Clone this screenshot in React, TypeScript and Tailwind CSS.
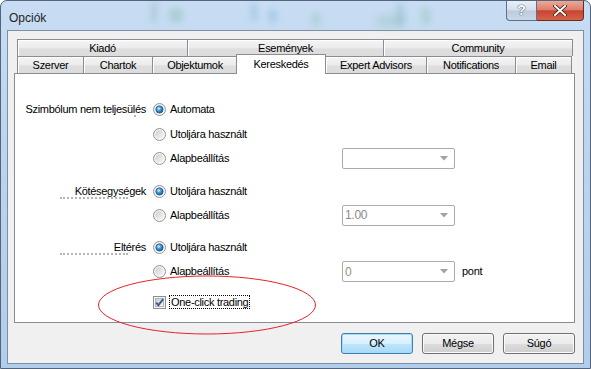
import React from 'react';

const font = "font-['Liberation_Sans',Arial,sans-serif]";

const Radio: React.FC<{ checked?: boolean }> = ({ checked }) => (
  <svg width="13" height="13" viewBox="0 0 13 13" className="shrink-0">
    <circle cx="6.5" cy="6.5" r="6" fill="url(#rOuter)" stroke="#949494" />
    <circle cx="6.5" cy="6.5" r="4.2" fill="url(#rInner)" />
    {checked && (
      <>
        <circle cx="6.5" cy="6.5" r="3.6" fill="url(#rDot)" stroke="#1d5a8a" strokeWidth="0.8" />
        <circle cx="5.7" cy="5.6" r="1.1" fill="#cdeafd" opacity="0.9" />
      </>
    )}
  </svg>
);

const Checkbox: React.FC = () => (
  <svg width="13" height="13" viewBox="0 0 13 13" className="shrink-0">
    <rect x="0.5" y="0.5" width="12" height="12" fill="#f4f4f4" stroke="#8e8f8f" />
    <rect x="2.5" y="2.5" width="8" height="8" fill="url(#cInner)" stroke="#b3b6bb" />
    <path d="M3.2 6.6 L5.4 9.2 L10.2 3.1" fill="none" stroke="#44598c" strokeWidth="1.9" />
  </svg>
);

const Combo: React.FC<{ value?: string; color?: string }> = ({ value, color }) => (
  <div className="w-[113px] h-[21px] flex items-center border border-[#ababab] rounded-[2px] bg-white pl-[2px] pr-[6px] shrink-0">
    <span className={`flex-1 text-[12px] ${color ?? 'text-[#8a8a8a]'}`}>{value}</span>
    <svg width="8" height="5" viewBox="0 0 8 5">
      <path d="M0 0 H8 L4 4.5 Z" fill="#a2a2a2" />
    </svg>
  </div>
);

const Tab: React.FC<{ label: string; w: string; last?: boolean }> = ({ label, w, last }) => (
  <div
    className={`${w} h-[17px] flex items-center justify-center border-t border-l border-[#898c95] ${last ? 'border-r' : ''} bg-[linear-gradient(180deg,#f4f4f4_0%,#ececec_50%,#dedede_55%,#dcdcdc_100%)] shadow-[inset_1px_1px_0_#ffffff]`}
  >
    {label}
  </div>
);

const Button: React.FC<{ label: string; primary?: boolean }> = ({ label, primary }) => (
  <div
    className={`w-[72px] h-[21px] flex items-center justify-center rounded-[3px] border ${
      primary
        ? 'border-[#3c7fb1] bg-[linear-gradient(180deg,#eaf6fd_0%,#d9f0fc_50%,#bee6fd_51%,#a7d9f5_100%)] shadow-[inset_0_0_0_1px_#a6dcf7]'
        : 'border-[#707070] bg-[linear-gradient(180deg,#f2f2f2_0%,#ebebeb_50%,#dddddd_51%,#cfcfcf_100%)] shadow-[inset_0_0_0_1px_#fbfbfb]'
    }`}
  >
    {label}
  </div>
);

const Row: React.FC<{ h: string; label?: string; dots?: string; children?: React.ReactNode }> = ({ h, label, dots, children }) => (
  <div className={`flex items-center ${h}`}>
    <div className="relative w-[131px] text-right">
      {label}
      {dots && <span className={`absolute top-[14px] h-0 border-t-2 border-dotted border-[#b5b5b5] ${dots}`} />}
    </div>
    {children}
  </div>
);

const Choice: React.FC<{ label: string; checked?: boolean }> = ({ label, checked }) => (
  <div className="w-[189px] ml-[7px] flex items-center gap-[4px]">
    <Radio checked={checked} />
    <span>{label}</span>
  </div>
);

export default function App() {
  return (
    <div className={`w-[591px] h-[369px] bg-white text-[11px] tracking-[-0.3px] text-black ${font}`}>
      <svg width="0" height="0" className="absolute">
        <defs>
          <linearGradient id="rOuter" x1="0" y1="0" x2="1" y2="1">
            <stop offset="0" stopColor="#eaeaea" />
            <stop offset="1" stopColor="#ffffff" />
          </linearGradient>
          <linearGradient id="rInner" x1="0" y1="0" x2="1" y2="1">
            <stop offset="0" stopColor="#cfcfcf" />
            <stop offset="1" stopColor="#f7f7f7" />
          </linearGradient>
          <radialGradient id="rDot" cx="0.4" cy="0.35" r="0.7">
            <stop offset="0" stopColor="#9fd6fb" />
            <stop offset="0.6" stopColor="#2a86c9" />
            <stop offset="1" stopColor="#0d5891" />
          </radialGradient>
          <linearGradient id="cInner" x1="0" y1="0" x2="1" y2="1">
            <stop offset="0" stopColor="#c9ccd2" />
            <stop offset="1" stopColor="#f5f5f5" />
          </linearGradient>
        </defs>
      </svg>

      <div className="relative w-[591px] h-[369px] flex flex-col rounded-t-[7px] border border-[#52657d] bg-[linear-gradient(180deg,#c8ddf3_0%,#bcd4ee_40%,#b2cdea_100%)] overflow-hidden">
        {/* title bar */}
        <div className="relative h-[29px] flex items-start justify-between shrink-0">
          <div className="absolute left-[150px] top-[0px] w-[6px] h-[22px] rounded-full bg-[#6fae9a] opacity-30 blur-[3px]" />
          <div className="absolute left-[168px] top-[6px] w-[14px] h-[16px] rounded-full bg-[#6fae9a] opacity-30 blur-[3px]" />
          <div className="absolute left-[250px] top-[2px] w-[6px] h-[18px] rounded-full bg-[#5f9fc8] opacity-30 blur-[3px]" />
          <div className="absolute left-[268px] top-[8px] w-[8px] h-[14px] rounded-full bg-[#5f9fc8] opacity-30 blur-[3px]" />
          <div className="absolute left-[310px] top-[10px] w-[10px] h-[16px] rounded-full bg-[#7fb8a0] opacity-25 blur-[3px]" />
          <div className="absolute left-[375px] top-[14px] w-[30px] h-[12px] rounded-full bg-[#7fb8a0] opacity-30 blur-[4px]" />
          <div className="absolute left-[395px] top-[2px] w-[8px] h-[22px] rounded-full bg-[#6fa8b8] opacity-30 blur-[3px]" />
          <div className="absolute left-[420px] top-[6px] w-[10px] h-[18px] rounded-full bg-[#7fb8a0] opacity-30 blur-[3px]" />
          <span className="relative mt-[8px] ml-[8px] text-[12px] tracking-[0px] text-[#1e1e1e]">Opciók</span>
          <div className="relative flex mr-[6px]">
            <div className="w-[31px] h-[20px] flex items-center justify-center rounded-bl-[4px] border border-t-0 border-[#5d7188] bg-[linear-gradient(180deg,#e8eff7_0%,#d4dfec_48%,#bccbdd_52%,#cad8e8_100%)]">
              <span className="text-[14px] font-bold text-white [text-shadow:0_0_1px_#2c3a4c,0_0_1px_#2c3a4c]">?</span>
            </div>
            <div className="w-[47px] h-[20px] flex items-center justify-center rounded-br-[4px] border border-l-0 border-t-0 border-[#6b2a20] bg-[linear-gradient(180deg,#eba999_0%,#dd7f6c_45%,#c8452f_52%,#d4624a_100%)]">
              <svg width="14" height="11" viewBox="0 0 14 11">
                <path d="M2 1 L12 10 M12 1 L2 10" stroke="#3a1a14" strokeWidth="3.6" strokeLinecap="square" />
                <path d="M2 1 L12 10 M12 1 L2 10" stroke="#ffffff" strokeWidth="2" strokeLinecap="square" />
              </svg>
            </div>
          </div>
        </div>

        {/* client area */}
        <div className="mx-[6px] mb-[4px] flex-1 flex flex-col border border-[#7d8fa4] bg-[#f0f0f0] pt-[8px] pl-[6px] pr-[8px]">
          {/* tabs */}
          <div className="pl-[3px]">
            <div className="flex h-[17px]">
              <Tab label="Kiadó" w="w-[170px]" />
              <Tab label="Események" w="w-[196px]" />
              <Tab label="Community" w="w-[190px]" last />
            </div>
            <div className="flex h-[17px] items-end">
              <Tab label="Szerver" w="w-[66px]" />
              <Tab label="Chartok" w="w-[69px]" />
              <Tab label="Objektumok" w="w-[85px]" />
              <div className="relative z-10 w-[90px] h-[20px] -mx-[1px] -mb-px flex items-start justify-center pt-[1px] border border-b-0 border-[#898c95] bg-white">
                Kereskedés
              </div>
              <div className="flex items-end">
                <Tab label="Expert Advisors" w="w-[101px]" />
                <Tab label="Notifications" w="w-[89px]" />
                <Tab label="Email" w="w-[57px]" last />
              </div>
            </div>
          </div>

          {/* panel */}
          <div className="h-[250px] border border-[#898c95] bg-white pt-[23px]">
            <Row h="h-[25px]" label="Szimbólum nem teljesülés" dots="right-[10px] w-[2px]">
              <Choice label="Automata" checked />
            </Row>
            <Row h="h-[24px]">
              <Choice label="Utoljára használt" />
            </Row>
            <Row h="h-[24px]">
              <Choice label="Alapbeállítás" />
              <Combo />
            </Row>
            <div className="h-[9px]" />
            <Row h="h-[24px]" label="Kötésegységek" dots="left-[45px] w-[68px]">
              <Choice label="Utoljára használt" checked />
            </Row>
            <Row h="h-[24px]">
              <Choice label="Alapbeállítás" />
              <Combo value="1.00" />
            </Row>
            <div className="h-[8px]" />
            <Row h="h-[24px]" label="Eltérés" dots="left-[45px] w-[68px]">
              <Choice label="Utoljára használt" checked />
            </Row>
            <Row h="h-[25px]">
              <Choice label="Alapbeállítás" />
              <Combo value="0" color="text-[#9a8f7e]" />
              <span className="ml-[7px]">pont</span>
            </Row>
            <div className="h-[6px]" />
            <Row h="h-[24px]">
              <div className="ml-[7px] flex items-center gap-[3px]">
                <Checkbox />
                <span className="border border-dotted border-black px-[1px] leading-[12px]">One-click trading</span>
              </div>
            </Row>
          </div>

          {/* buttons */}
          <div className="mt-[10px] flex justify-end gap-[9px]">
            <Button label="OK" primary />
            <Button label="Mégse" />
            <Button label="Súgó" />
          </div>
        </div>

        {/* red annotation */}
        <svg className="absolute left-[95px] top-[273px] pointer-events-none" width="222" height="62" viewBox="0 0 222 62">
          <ellipse cx="111" cy="31" rx="108.5" ry="29" fill="none" stroke="#e8202a" strokeWidth="1" />
        </svg>
      </div>
    </div>
  );
}
